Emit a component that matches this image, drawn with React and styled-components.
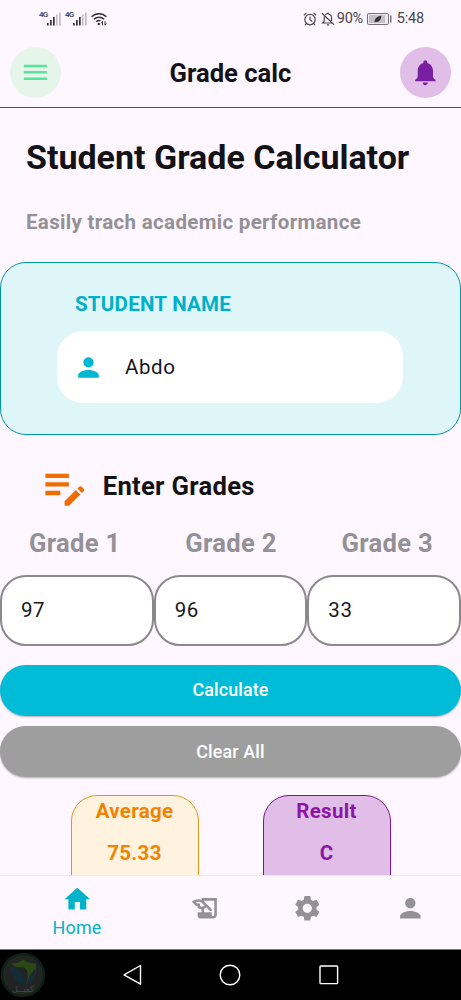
import React from "react";
import styled, { createGlobalStyle } from "styled-components";
import {
  MdMenu,
  MdNotifications,
  MdPerson,
  MdEditNote,
  MdHome,
  MdHistoryEdu,
  MdSettings,
} from "react-icons/md";

const GlobalStyle = createGlobalStyle`
  * { box-sizing: border-box; }
  body { margin: 0; background: #fef7ff; }
`;

const Screen = styled.div`
  width: 461px;
  height: 1000px;
  display: flex;
  flex-direction: column;
  overflow: hidden;
  background: #fef7ff;
  color: #131216;
  font-family: Roboto, "Liberation Sans", sans-serif;
`;

const StatusBar = styled.div`
  height: 37px;
  flex: none;
  display: flex;
  justify-content: space-between;
  padding: 0 37px 0 39px;
  color: #4a464d;
`;

const StatusGroup = styled.div`
  display: flex;
  align-items: center;
  height: 37px;
`;

const StatusText = styled.span`
  font-size: 14.5px;
  line-height: 18px;
  letter-spacing: ${(p) => p.$spacing || "0"};
  margin: ${(p) => p.$margin || "0"};
`;

const NetworkTag = styled.span`
  font-size: 8px;
  line-height: 8px;
  font-weight: 600;
  width: 8px;
  margin-top: -8px;
  letter-spacing: -0.9px;
`;

const Header = styled.header`
  height: 71px;
  flex: none;
  display: flex;
  align-items: center;
  justify-content: space-between;
  padding: 0 10px;
  border-bottom: 1px solid #555058;
`;

const RoundButton = styled.button`
  width: 51px;
  height: 51px;
  border: 0;
  padding: 0;
  border-radius: 50%;
  display: flex;
  align-items: center;
  justify-content: center;
  background: ${(p) => p.$bg};
  color: ${(p) => p.$color};
  font-size: 30.7px;
`;

const AppTitle = styled.div`
  font-size: 25.6px;
  line-height: 30px;
  font-weight: 700;
  padding-top: 2px;
`;

const Content = styled.main`
  height: 767px;
  flex: none;
  overflow: hidden;
  display: flex;
  flex-direction: column;
`;

const PageTitle = styled.h1`
  margin: 29px 0 0 26px;
  font-size: 34px;
  line-height: 40px;
  font-weight: 700;
  white-space: nowrap;
`;

const Subtitle = styled.p`
  margin: 32px 0 0 26px;
  font-size: 20.5px;
  line-height: 26px;
  font-weight: 700;
  letter-spacing: 0.32px;
  color: #949196;
`;

const NameCard = styled.section`
  height: 173px;
  flex: none;
  margin-top: 27px;
  padding: 27px 56px 0;
  border: 1.3px solid #0097a7;
  border-radius: 26px;
  background: #dff6f9;
`;

const NameLabel = styled.div`
  padding-left: 18px;
  font-size: 20.5px;
  line-height: 28px;
  font-weight: 700;
  letter-spacing: 0.25px;
  color: #00b0c8;
`;

const NameField = styled.div`
  width: 346px;
  height: 72px;
  margin-top: 13px;
  padding-left: 16px;
  display: flex;
  align-items: center;
  border-radius: 26px;
  background: #fff;
  color: #00b8d4;
  font-size: 31px;
`;

const FieldText = styled.span`
  font-size: 20.5px;
  line-height: 28px;
  letter-spacing: 0.6px;
  color: #17151a;
`;

const NameValue = styled(FieldText)`
  margin-left: 21px;
`;

const SectionHeading = styled.div`
  display: flex;
  align-items: center;
  height: 52px;
  flex: none;
  margin-top: 26px;
  padding-left: 38.5px;
  color: #ef6c00;
  font-size: 51.2px;
`;

const HeadingText = styled.h2`
  margin: 0 0 2px 13px;
  font-size: 25.6px;
  line-height: 30px;
  font-weight: 700;
  letter-spacing: 0.3px;
  color: #131216;
`;

const LabelRow = styled.div`
  display: flex;
  justify-content: space-between;
  margin-top: 14px;
  padding: 0 28px 0 29px;
`;

const GradeLabel = styled.label`
  font-size: 25.6px;
  line-height: 32px;
  font-weight: 700;
  letter-spacing: 0.3px;
  color: #949196;
`;

const FieldRow = styled.div`
  display: grid;
  grid-template-columns: repeat(3, 1fr);
  margin-top: 16px;
`;

const GradeField = styled.div`
  height: 71px;
  display: flex;
  align-items: center;
  padding: 0 0 2px 19px;
  border: 2.5px solid #8b898c;
  border-radius: 26px;
  background: #fff;
`;

const Buttons = styled.div`
  display: flex;
  flex-direction: column;
  gap: 10.5px;
  margin-top: 18.5px;
`;

const ActionButton = styled.button`
  height: 51px;
  border: 0;
  border-radius: 26px;
  background: ${(p) => p.$bg};
  color: #fff;
  font-family: inherit;
  font-size: 17.9px;
  line-height: 24px;
  font-weight: 500;
  letter-spacing: 0.13px;
  box-shadow: 0 1px 2px rgba(0, 0, 0, 0.3);
`;

const Results = styled.div`
  display: flex;
  justify-content: center;
  gap: 64px;
  margin-top: 18px;
`;

const ResultCard = styled.div`
  width: 128px;
  height: 128px;
  flex: none;
  display: flex;
  flex-direction: column;
  align-items: center;
  gap: 18px;
  padding-top: 3px;
  border: 1.3px solid ${(p) => p.$border};
  border-radius: 26px;
  background: ${(p) => p.$bg};
  color: ${(p) => p.$color};
  font-size: 20.5px;
  line-height: 24px;
  font-weight: 700;
  letter-spacing: 0.3px;
`;

const BottomNav = styled.nav`
  height: 74px;
  flex: none;
  display: grid;
  grid-template-columns: 154px 102.5px 102.5px 102px;
  border-top: 1px solid #f0e9f2;
`;

const NavItem = styled.div`
  display: flex;
  flex-direction: column;
  align-items: center;
  padding-top: ${(p) => (p.$active ? "8px" : "17px")};
  font-size: 30.7px;
  color: ${(p) => (p.$active ? "#00b3ca" : "#949196")};
`;

const NavLabel = styled.span`
  font-size: 17.9px;
  line-height: 22px;
  margin-top: 2px;
  letter-spacing: 0.2px;
`;

const SystemBar = styled.div`
  height: 51px;
  flex: none;
  display: flex;
  align-items: center;
  background: #000;
  border-top: 1px solid #777;
`;

const SystemKeys = styled.div`
  display: flex;
  align-items: center;
  gap: 77.5px;
  margin-left: 75.5px;
`;

const SignalIcon = () => (
  <svg width="18" height="14" viewBox="0 0 18 14">
    <g fill="#343037">
      <rect x="0" y="11" width="1.7" height="2.5" />
      <rect x="3" y="8" width="1.7" height="5.5" />
      <rect x="6" y="5" width="1.7" height="8.5" />
    </g>
    <g fill="#c4bec6">
      <rect x="9" y="2.5" width="1.6" height="11" />
      <rect x="12" y="0.5" width="1.8" height="13" />
    </g>
  </svg>
);

const WifiIcon = () => (
  <svg width="16" height="14" viewBox="0 0 16 14" fill="none" stroke="#343037" strokeWidth="1.5">
    <path d="M.6 4.8a10.3 10.3 0 0 1 14.8 0M3 7.3a7 7 0 0 1 10 0M5.3 9.7a3.8 3.8 0 0 1 4.2-.8" />
    <circle cx="7.8" cy="12" r="1.2" fill="#343037" stroke="none" />
    <path d="M11.5 9.3v4M14 9.3v4M10.2 11.4l1.3-1.6M15.4 11.4L14 13" strokeWidth="1" />
  </svg>
);

const AlarmIcon = () => (
  <svg width="14" height="14" viewBox="0 0 14 14" fill="none" stroke="#4a464d" strokeWidth="1.2">
    <circle cx="7" cy="7.6" r="5.2" />
    <path d="M7 4.5v3.3l2.2 1.6M.8 3.2L3.5.9M13.2 3.2L10.5.9M3.2 11.6L2 13M10.8 11.6L12 13" />
  </svg>
);

const MutedBellIcon = () => (
  <svg width="14" height="14" viewBox="0 0 14 14" fill="none" stroke="#4a464d" strokeWidth="1.2">
    <path d="M1 1.2l12 11.6M4.3 2.6A3.9 3.9 0 0 1 10.6 5.7V9M3.2 4.6v4.6L1.5 11h9M5.8 12.9h2.4M7 .4v1.3" />
  </svg>
);

const BatteryIcon = () => (
  <svg width="25" height="12" viewBox="0 0 25 12">
    <rect x=".5" y=".5" width="21" height="11" rx="1.3" fill="#eee8ef" stroke="#77727a" />
    <rect x="2" y="2" width="16" height="8" fill="#c5c0c7" />
    <path d="M7.7 9.6C7 6 10 3.5 14.2 2.8 14.3 6.8 12 9.5 8.8 8.8z" fill="#343037" />
    <rect x="23" y="2.5" width="1.5" height="7" fill="#77727a" />
  </svg>
);

const BadgeLogo = () => (
  <svg width="46" height="46" viewBox="0 0 46 46">
    <circle cx="23" cy="23" r="21" fill="#222424" stroke="#0f1d1b" strokeWidth="2.5" />
    <circle cx="23" cy="23" r="19.2" fill="none" stroke="#1c2c12" strokeWidth="1" />
    <path d="M23 7.5c4 3 8 4 13 4 1.500 10-3 17.500-10 21 4-10 1-16-3-17.500C17 16 14 14 10.500 11.500c4.500 0 9-1 12.500-4z" fill="#2b4712" />
    <path d="M10 14c9 1 16 8 14.500 19.500C15.500 30 10 23 10 14z" fill="#152b38" />
    <path d="M35.500 17c0 7-3.500 13-8.500 16 1-7 3-12 8.500-16z" fill="#152b38" />
    <text x="23" y="40" textAnchor="middle" fontSize="8.500" fontFamily="DejaVu Sans, sans-serif" fill="#454848">
      كفيــل
    </text>
  </svg>
);

const BackKey = () => (
  <svg width="20" height="22" viewBox="0 0 20 22" fill="none" stroke="#fff" strokeWidth="1.4" strokeLinejoin="round">
    <path d="M18.500 1.500v18.700L2 10.800z" />
  </svg>
);

const HomeKey = () => (
  <svg width="22" height="22" viewBox="0 0 22 22" fill="none" stroke="#fff" strokeWidth="1.4">
    <circle cx="11" cy="11" r="9.800" />
  </svg>
);

const RecentKey = () => (
  <svg width="20" height="20" viewBox="0 0 20 20" fill="none" stroke="#fff" strokeWidth="1.4">
    <rect x="1" y="1" width="17.600" height="17.600" rx="0.800" />
  </svg>
);

const grades = [
  { label: "Grade 1", value: "97" },
  { label: "Grade 2", value: "96" },
  { label: "Grade 3", value: "33" },
];

export default function App() {
  return (
    <Screen>
      <GlobalStyle />
      <StatusBar>
        <StatusGroup>
          <NetworkTag>4G</NetworkTag>
          <SignalIcon />
          <NetworkTag>4G</NetworkTag>
          <SignalIcon />
          <WifiIcon />
        </StatusGroup>
        <StatusGroup>
          <AlarmIcon />
          <StatusText $margin="0 0 0 4px" />
          <MutedBellIcon />
          <StatusText $margin="0 4px 0 2px" $spacing="-0.3px">90%</StatusText>
          <BatteryIcon />
          <StatusText $margin="0 0 0 5px" $spacing="-0.2px">5:48</StatusText>
        </StatusGroup>
      </StatusBar>
      <Header>
        <RoundButton $bg="#e6f5e9" $color="#57e39a"><MdMenu /></RoundButton>
        <AppTitle>Grade calc</AppTitle>
        <RoundButton $bg="#e1bee7" $color="#7b1fa2"><MdNotifications /></RoundButton>
      </Header>
      <Content>
        <PageTitle>Student Grade Calculator</PageTitle>
        <Subtitle>Easily trach academic performance</Subtitle>
        <NameCard>
          <NameLabel>STUDENT NAME</NameLabel>
          <NameField>
            <MdPerson />
            <NameValue>Abdo</NameValue>
          </NameField>
        </NameCard>
        <SectionHeading>
          <MdEditNote />
          <HeadingText>Enter Grades</HeadingText>
        </SectionHeading>
        <LabelRow>
          {grades.map((g) => <GradeLabel key={g.label}>{g.label}</GradeLabel>)}
        </LabelRow>
        <FieldRow>
          {grades.map((g) => (
            <GradeField key={g.label}><FieldText>{g.value}</FieldText></GradeField>
          ))}
        </FieldRow>
        <Buttons>
          <ActionButton $bg="#00bcd7">Calculate</ActionButton>
          <ActionButton $bg="#9e9e9e">Clear All</ActionButton>
        </Buttons>
        <Results>
          <ResultCard $bg="#fff2df" $border="#df971a" $color="#f08300">
            <span>Average</span>
            <span>75.33</span>
          </ResultCard>
          <ResultCard $bg="#e1bee7" $border="#7b1596" $color="#8c14a6">
            <span>Result</span>
            <span>C</span>
          </ResultCard>
        </Results>
      </Content>
      <BottomNav>
        <NavItem $active>
          <MdHome />
          <NavLabel>Home</NavLabel>
        </NavItem>
        <NavItem><MdHistoryEdu /></NavItem>
        <NavItem><MdSettings /></NavItem>
        <NavItem><MdPerson /></NavItem>
      </BottomNav>
      <SystemBar>
        <BadgeLogo />
        <SystemKeys>
          <BackKey />
          <HomeKey />
          <RecentKey />
        </SystemKeys>
      </SystemBar>
    </Screen>
  );
}
